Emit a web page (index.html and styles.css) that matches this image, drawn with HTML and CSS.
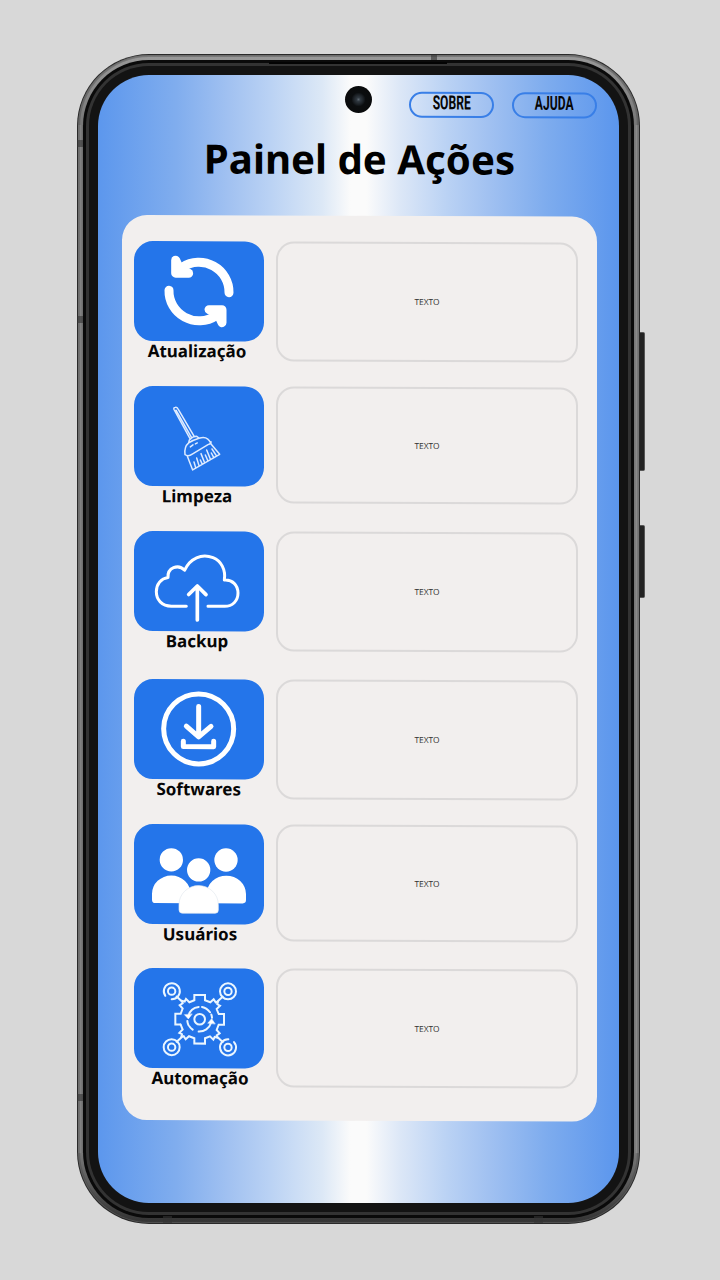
FILE: index.html
```html
<!DOCTYPE html>
<html lang="pt-BR">
<head>
<meta charset="utf-8">
<title>Painel de Ações</title>
<link rel="stylesheet" href="styles.css">
</head>
<body>
<div class="phone">
  <i class="side-key volume"></i><i class="side-key power"></i>
  <i class="band band-tl"></i><i class="band band-l"></i><i class="band band-bl"></i><i class="band band-t"></i><i class="band band-b1"></i><i class="band band-b2"></i>
  <div class="frame"><div class="groove"><div class="rim"><div class="bezel">
    <i class="speaker"></i>
    <main class="screen">
      <i class="camera"></i>
      <nav class="nav">
        <a class="pill"><span>SOBRE</span></a>
        <a class="pill pill-help"><span>AJUDA</span></a>
      </nav>
      <h1 class="title">Painel de Ações</h1>
      <section class="panel">
        <div class="row">
          <div class="action">
            <svg class="tile" viewBox="40 33 390 300"><g class="ink thick"><path d="M327 187A90 89 0 0 0 187 111M147 180A90 89 0 0 0 288 256"/><path class="solid" d="M167 90V129H206L180 118ZM306 277V238H267L293 249Z"/></g></svg>
            <div class="label">Atualização</div>
          </div>
          <div class="box">TEXTO</div>
        </div>
        <div class="row short">
          <div class="action">
            <svg class="tile" viewBox="40 33 390 300"><g class="ink thin"><path d="M210 190L162 103Q160 97 166 96Q171 95 174 101L223 184M168 105L214 186M206 203L208 194Q218 183 230 183L236 188M206 203Q220 194 237 189M195 238Q192 215 206 203M237 189Q263 180 273 205M195 238Q204 246 218 236L264 208Q274 206 273 199M202 243L218 284L299 237L273 206M211 215L219 209M226 206L232 203M227 277L222 260M237 271L230 248M246 265L241 254M253 260L243 235M263 255L256 239M271 251L260 224M281 246L274 233M289 241L276 221"/></g></svg>
            <div class="label">Limpeza</div>
          </div>
          <div class="box">TEXTO</div>
        </div>
        <div class="row tall">
          <div class="action">
            <svg class="tile" viewBox="40 33 390 300"><g class="ink medium"><path d="M199 258H154C125 258 109 238 109 215C109 192 123 175 144 172C142 143 174 130 194 150C210 114 245 99 279 112C303 121 318 148 313 179C337 177 354 194 354 218C354 242 337 258 314 258H264"/><path class="arrow" d="M232 299V198M206 223L232 197L258 223"/></g></svg>
            <div class="label">Backup</div>
          </div>
          <div class="box">TEXTO</div>
        </div>
        <div class="row">
          <div class="action">
            <svg class="tile" viewBox="40 27 390 300"><g class="ink heavy"><circle cx="236" cy="176" r="105"/><path d="M236 109V198M199 168L236 200L273 168M190 213V229H281V213"/></g></svg>
            <div class="label shifted">Softwares</div>
          </div>
          <div class="box">TEXTO</div>
        </div>
        <div class="row short users">
          <div class="action">
            <svg class="tile" viewBox="40 27 390 300"><g class="people"><circle cx="154" cy="134" r="35"/><circle cx="318" cy="134" r="35"/><circle cx="236" cy="164" r="35"/><path d="M96 236A58 55 0 0 1 212 236V252Q212 264 202 264H106Q96 264 96 254ZM260 236A59 55 0 0 1 378 236V254Q378 264 368 264H270Z"/><path class="front" d="M177 268A59 57 0 0 1 295 268V284Q295 294 285 294H187Q177 294 177 284Z"/></g></svg>
            <div class="label shifted more">Usuários</div>
          </div>
          <div class="box">TEXTO</div>
        </div>
        <div class="row last">
          <div class="action">
            <svg class="tile" viewBox="40 24 390 300">
              <defs><path id="quarter" d="M-16 -58V-73H16V-57L32 -51L42 -60L48 -51L55 -53L53 -45L61 -41L51 -31L57 -16"/></defs>
              <g class="ink gear"><g transform="translate(239 177)"><use href="#quarter"/><use href="#quarter" transform="rotate(90)"/><use href="#quarter" transform="rotate(180)"/><use href="#quarter" transform="rotate(270)"/><circle r="16"/><path d="M7 -37A38 38 0 0 1 31 -21M-31 21A38 38 0 0 0 -21 31M-34 -10A37 37 0 0 1 -3 -37M-37 5A38 38 0 0 0 -34 17M34 11A37 37 0 0 1 -3 37M37 -5A38 38 0 0 0 35 -14"/><path class="solid" d="M-45 -13L-34 -1L-23 -15ZM25 11L36 -2L46 13Z"/><path d="M-54 -54L-69 -68M54 -54L69 -68M-54 54L-69 68M54 54L69 68"/></g>
              <circle cx="155" cy="93" r="11"/><circle cx="324" cy="93" r="11"/><circle cx="155" cy="261" r="11"/><circle cx="324" cy="261" r="11"/><path d="M136 107A24 24 0 1 1 155 117"/><circle cx="324" cy="93" r="24"/><circle cx="155" cy="261" r="24"/><path d="M325 237A24 24 0 1 0 342 245"/></g>
            </svg>
            <div class="label shifted more">Automação</div>
          </div>
          <div class="box">TEXTO</div>
        </div>
      </section>
    </main>
  </div></div></div></div>
</div>
</body>
</html>
```
FILE: styles.css
```css
* { box-sizing: border-box; }
body { margin: 0; width: 720px; height: 1280px; padding: 54px 0 0 77px; background: #d8d8d8; overflow: hidden; font-family: "Noto Sans", "Open Sans", sans-serif; color: #060606; }
.phone { position: relative; width: 563px; height: 1170px; padding: 1px; border-radius: 72px; background: #292929; }
.frame { height: 100%; padding: 5px; border-radius: 71px; background: linear-gradient(90deg, #999 0, #6b6b6b 5px, transparent 6px, transparent 556px, #777 557px, #aaa 100%) 0 70px / 100% 1028px no-repeat, linear-gradient(#999, #777 70px, #777 1098px, #333); box-shadow: inset 0 0 0 1px #6668, inset 0 0 0 2px #3b3b3b55; }
.groove { height: 100%; padding: 3px; border-radius: 66px; background: #0a0a0a; }
.rim { height: 100%; padding: 3px; border-radius: 63px; background: #333; }
.bezel { position: relative; height: 100%; padding: 9px; border-radius: 60px; background: #131313; }
.screen { position: relative; height: 1128px; width: 521px; padding: 17px 22.5px 0 23.5px; overflow: hidden; border-radius: 51px; background: linear-gradient(90deg, #5c97ed 0, #80adee 15%, #a1c1f1 25%, #bad2f4 33%, #dce8f6 43%, #fbfbfb 48.5%, #fbfbfb 51.5%, #dce7f7 58%, #bad2f4 67%, #a1c1f1 75%, #7eacee 86%, #5b96ed 100%); }
.speaker { position: absolute; top: -4px; left: 180px; width: 178px; height: 2px; background: #030303; }
.side-key { position: absolute; left: 563px; width: 5px; border: 1px solid #555; border-left: 0; border-radius: 0 2px 2px 0; background: #222; }
.volume { top: 278px; height: 139px; }
.power { top: 471px; height: 73px; }
.band { position: absolute; z-index: 1; width: 6px; height: 7px; background: #3339; }
.band-tl { left: 0; top: 86px; }
.band-l { left: 0; top: 262px; }
.band-bl { left: 0; top: 1040px; }
.band-t { left: 354px; top: 1px; height: 5px; }
.band-b1 { left: 86px; top: 1162px; width: 9px; }
.band-b2 { left: 457px; top: 1162px; width: 9px; }
.camera { position: absolute; left: 247px; top: 11px; width: 27px; height: 27px; border-radius: 50%; background: radial-gradient(circle, #5c6770 0, #303840 2px, #1b2025 5px, #0b0d0f 7px, #090909 100%); }
.nav { display: flex; justify-content: flex-end; gap: 18px; height: 26px; transform: skewY(.25deg); transform-origin: 75% 0; }
.pill { display: flex; justify-content: center; width: 85px; height: 26px; border: 2px solid #397fe7; border-radius: 13px; font: 700 19.5px/22px Roboto, sans-serif; }
.pill span { transform: translateY(-1.5px) scaleX(.62); }
.title { margin: 12px 0 0; width: 475px; height: 57px; font-size: 40.2px; line-height: 57px; font-weight: 700; text-align: center; white-space: nowrap; color: #000; transform: skewY(.2deg); }
.panel { width: 475px; height: 905px; margin-top: 28px; padding: 26px 0 0 12px; border-radius: 25px; background: #f2efee; transform: skewY(.2deg); transform-origin: 0 0; }
.row { display: flex; align-items: flex-start; gap: 12px; height: 145px; }
.row.tall { height: 148px; }
.row.users { height: 144px; }
.action { width: 130px; }
.tile { display: block; width: 130px; height: 100px; border-radius: 19px; background: #2475ea; }
.tile > g { transform: translate(-2px, 0); }
.label { margin: -2px 0 0 -2px; width: 130px; font-size: 17px; line-height: 24px; font-weight: 700; text-align: center; white-space: nowrap; }
.label.shifted { margin-left: -.3px; }
.label.more { margin: -2.5px 0 0 1px; }
.box { display: flex; align-items: center; justify-content: center; width: 302px; height: 120px; border: 2px solid #dbd9d9; border-radius: 18px; font: 8.4px/12px "Open Sans", sans-serif; color: #333; }
.short .box { height: 117px; }
.last .box { height: 119px; }
.ink { fill: none; stroke: #fff; stroke-linecap: round; stroke-linejoin: round; }
.solid { fill: #fff; }
.thick { stroke-width: 27; }
.thin { stroke-width: 4.5; stroke: #deebff; }
.medium { stroke-width: 9; }
.arrow { stroke-width: 11; }
.heavy { stroke-width: 15; }
.gear { stroke-width: 6; stroke-linejoin: miter; stroke: #eaf6ff; }
.gear .solid { stroke-width: 2; }
.people { fill: #fff; }
.front { stroke: #e3e8ee; stroke-width: 2; }
```
